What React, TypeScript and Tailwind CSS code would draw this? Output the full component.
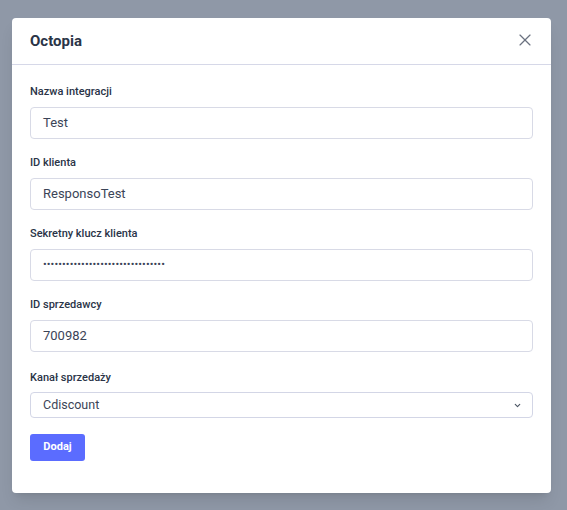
import { ChevronDown, X } from "lucide-react";

const fields = [
  { label: "Nazwa integracji", value: "Test" },
  { label: "ID klienta", value: "ResponsoTest" },
  { label: "Sekretny klucz klienta", value: "••••••••••••••••••••••••••••••••", secret: true },
  { label: "ID sprzedawcy", value: "700982" },
];

export default function App() {
  return (
    <div className="min-h-[510px] w-full bg-[#8f98a7] pt-[18px] px-3 font-['Roboto',sans-serif]">
      <div className="w-[539px] h-[475px] bg-white rounded-[4px] shadow-lg">
        <div className="h-[47px] flex items-center justify-between pl-[18px] pr-4 border-b border-[#d6d8e8]">
          <h2 className="text-[15px] font-bold text-[#2a3447]">Octopia</h2>
          <X className="w-5 h-5 -mt-[2px] text-[#6b7280]" strokeWidth={1.4} />
        </div>
        <div className="flex flex-col px-[18px] pt-[19px]">
          {fields.map((f) => (
            <div key={f.label} className="mb-4">
              <label className="block h-4 leading-4 text-[11px] font-medium text-[#2a3447] mb-[7px]">{f.label}</label>
              <div className="h-8 w-[503px] border border-[#d8dae6] rounded-[4px] flex items-center px-3 text-[13px] text-[#3b4457]">
                {f.secret ? <span className="text-[11px] tracking-[0.1px]">{f.value}</span> : f.value}
              </div>
            </div>
          ))}
          <label className="block h-4 leading-4 text-[11px] font-medium text-[#2a3447] mb-[6px] mt-[2px]">Kanał sprzedaży</label>
          <div className="h-[26px] w-[503px] border border-[#d3d6e6] rounded-[4px] flex items-center justify-between pl-3 pr-[10px] text-[12.5px] text-[#3b4457]">
            <span>Cdiscount</span>
            <ChevronDown className="w-[9px] h-[9px] text-[#4b5563]" strokeWidth={3} />
          </div>
          <button className="self-start mt-4 h-[27px] w-[55px] rounded-[3px] bg-[#5b6cff] text-white text-[11px] font-bold">Dodaj</button>
        </div>
      </div>
    </div>
  );
}
